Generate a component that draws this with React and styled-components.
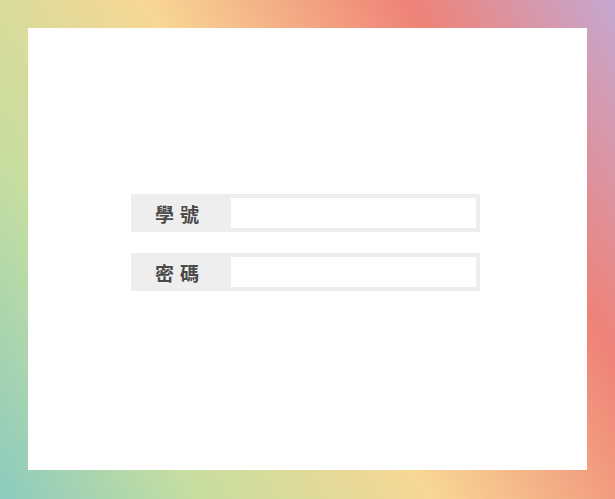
import React from "react";
import styled, { createGlobalStyle } from "styled-components";

const Global = createGlobalStyle`
  html, body { margin: 0; padding: 0; background: #fff; }
  body { font-family: "Noto Sans CJK TC", "Noto Sans", sans-serif; }
  * { box-sizing: border-box; }
`;

const Frame = styled.div`
  width: 615px;
  height: 499px;
  padding: 28px 28px 29px 28px;
  background: linear-gradient(
    60deg,
    #8bcbbf 0%,
    #c6dea0 22%,
    #f8d794 48%,
    #ef8277 77%,
    #c5a8d1 100%
  );
`;

const Panel = styled.div`
  height: 100%;
  background: #fff;
  display: flex;
  flex-direction: column;
  align-items: flex-start;
  gap: 21px;
  padding: 166px 0 0 103px;
`;

const Row = styled.label`
  display: flex;
  width: 349px;
  height: 38px;
  background: #eeeeee;
  padding: 4px 4px 4px 0;
`;

const Label = styled.span`
  width: 100px;
  flex: none;
  display: flex;
  align-items: center;
  justify-content: center;
  padding-right: 2px;
  font-size: 19px;
  font-weight: 700;
  letter-spacing: 6px;
  color: #4a4a4a;
`;

const Input = styled.input`
  flex: 1;
  min-width: 0;
  border: none;
  outline: none;
  background: #fff;
  font-size: 16px;
  padding: 0 8px;
`;

export default function App() {
  return (
    <>
      <Global />
      <Frame>
        <Panel>
          <Row>
            <Label>學號</Label>
            <Input type="text" />
          </Row>
          <Row>
            <Label>密碼</Label>
            <Input type="password" />
          </Row>
        </Panel>
      </Frame>
    </>
  );
}
